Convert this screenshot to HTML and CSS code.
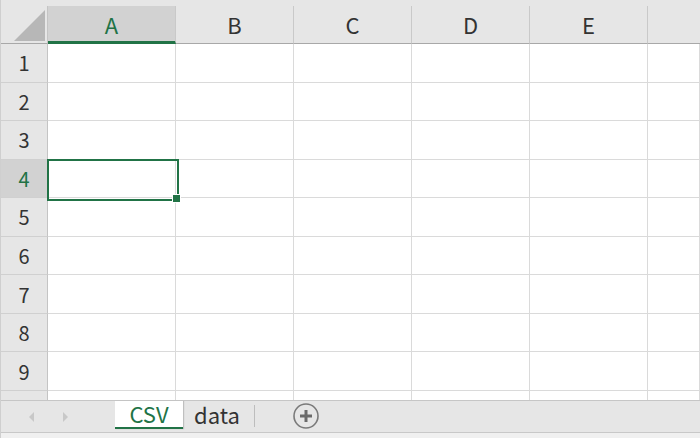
FILE: index.html
```html
<!DOCTYPE html>
<html>
<head>
<meta charset="utf-8">
<link rel="stylesheet" href="styles.css">
</head>
<body>
<div class="app">
  <div class="sheet">
    <div class="corner"><div class="tri"></div></div>
    <div class="ch sel">A</div>
    <div class="ch">B</div>
    <div class="ch">C</div>
    <div class="ch">D</div>
    <div class="ch">E</div>
    <div class="ch last"></div>

    <div class="rh">1</div><div class="c"></div><div class="c"></div><div class="c"></div><div class="c"></div><div class="c"></div><div class="c"></div>
    <div class="rh">2</div><div class="c"></div><div class="c"></div><div class="c"></div><div class="c"></div><div class="c"></div><div class="c"></div>
    <div class="rh">3</div><div class="c"></div><div class="c"></div><div class="c"></div><div class="c"></div><div class="c"></div><div class="c"></div>
    <div class="rh sel">4</div><div class="c"></div><div class="c"></div><div class="c"></div><div class="c"></div><div class="c"></div><div class="c"></div>
    <div class="rh">5</div><div class="c"></div><div class="c"></div><div class="c"></div><div class="c"></div><div class="c"></div><div class="c"></div>
    <div class="rh">6</div><div class="c"></div><div class="c"></div><div class="c"></div><div class="c"></div><div class="c"></div><div class="c"></div>
    <div class="rh">7</div><div class="c"></div><div class="c"></div><div class="c"></div><div class="c"></div><div class="c"></div><div class="c"></div>
    <div class="rh">8</div><div class="c"></div><div class="c"></div><div class="c"></div><div class="c"></div><div class="c"></div><div class="c"></div>
    <div class="rh">9</div><div class="c"></div><div class="c"></div><div class="c"></div><div class="c"></div><div class="c"></div><div class="c"></div>
    <div class="rh part"></div><div class="c part"></div><div class="c part"></div><div class="c part"></div><div class="c part"></div><div class="c part"></div><div class="c part"></div>

    <div class="selection"><div class="handle"></div></div>
  </div>
  <div class="tabbar">
    <div class="nav">
      <svg width="8" height="12" viewBox="0 0 8 12"><path d="M6 1 L1 6 L6 11 Z" fill="#c8c8c8"/></svg>
      <svg width="8" height="12" viewBox="0 0 8 12"><path d="M2 1 L7 6 L2 11 Z" fill="#c8c8c8"/></svg>
    </div>
    <div class="tab active">CSV</div>
    <div class="tab">data</div>
    <div class="sep"></div>
    <div class="add">
      <svg width="28" height="28" viewBox="0 0 28 28">
        <circle cx="14" cy="14" r="12" fill="none" stroke="#7a7a7a" stroke-width="1.6"/>
        <path d="M14 8 V20 M8 14 H20" stroke="#6a6a6a" stroke-width="3"/>
      </svg>
    </div>
  </div>
  <div class="status"></div>
</div>
</body>
</html>
```
FILE: styles.css
```css
* { box-sizing: border-box; }
html, body { margin: 0; padding: 0; }
body {
  width: 700px;
  height: 438px;
  overflow: hidden;
  background: #ffffff;
  font-family: "Noto Sans CJK JP", "Noto Sans", sans-serif;
}
.app {
  width: 700px;
  height: 438px;
  border-left: 1px solid #cfcfcf;
  display: flex;
  flex-direction: column;
}
.sheet {
  position: relative;
  height: 400px;
  display: grid;
  grid-template-columns: 47px 128px 118px 118px 118px 118px 52px;
  grid-template-rows: 44px repeat(9, 38.56px) 9px;
  background: #e6e6e6;
  overflow: hidden;
}
.corner {
  position: relative;
  border-bottom: 1px solid #a8a8a8;
  border-right: 1px solid #c4c4c4;
  margin-top: 6px;
}
.tri {
  position: absolute;
  right: 2px;
  bottom: 2px;
  width: 31px;
  height: 31px;
  background: #b7b7b7;
  clip-path: polygon(100% 0, 100% 100%, 0 100%);
}
.ch {
  margin-top: 6px;
  border-right: 1px solid #c9c9c9;
  border-bottom: 1px solid #a8a8a8;
  display: flex;
  align-items: center;
  justify-content: center;
  font-size: 22px;
  color: #333333;
  padding-bottom: 2px;
}
.ch.sel {
  background: #d2d2d2;
  color: #217346;
  border-bottom: 3px solid #217346;
  padding-bottom: 0;
}
.ch.last { border-right: none; }
.rh {
  background: #e6e6e6;
  border-right: 1px solid #c4c4c4;
  border-bottom: 1px solid #d0d0d0;
  display: flex;
  align-items: center;
  justify-content: center;
  font-size: 20px;
  color: #333333;
}
.rh.sel {
  background: #d2d2d2;
  color: #217346;
}
.c {
  background: #ffffff;
  border-right: 1px solid #dadada;
  border-bottom: 1px solid #dadada;
}
.part { border-bottom: none; }
.selection {
  position: absolute;
  left: 46px;
  top: 159px;
  width: 132px;
  height: 42px;
  border: 2px solid #217346;
}
.handle {
  position: absolute;
  right: -4px;
  bottom: -4px;
  width: 9px;
  height: 9px;
  background: #217346;
  border: 1px solid #ffffff;
}
.tabbar {
  height: 32px;
  background: #e6e6e6;
  border-top: 1px solid #c6c6c6;
  display: flex;
  align-items: stretch;
}
.nav {
  width: 114px;
  display: flex;
  align-items: center;
  gap: 25px;
  padding-left: 27px;
}
.tab {
  display: flex;
  align-items: center;
  justify-content: center;
  font-size: 22px;
  color: #333333;
  padding: 0 11px;
  margin-bottom: 3px;
}
.tab.active {
  width: 68px;
  background: #ffffff;
  color: #217346;
  border-bottom: 2px solid #217346;
  box-shadow: 1px 0 1px #bfbfbf;
  padding-bottom: 2px;
}
.tab:not(.active) { padding-bottom: 2px; padding-right: 12px; }
.sep {
  width: 1px;
  background: #bdbdbd;
  margin: 4px 0 5px 2px;
}
.add {
  display: flex;
  align-items: center;
  padding-left: 37px;
  padding-bottom: 2px;
}
.status {
  flex: 1;
  background: #f0f0f0;
  border-top: 1px solid #c8c8c8;
}
```
